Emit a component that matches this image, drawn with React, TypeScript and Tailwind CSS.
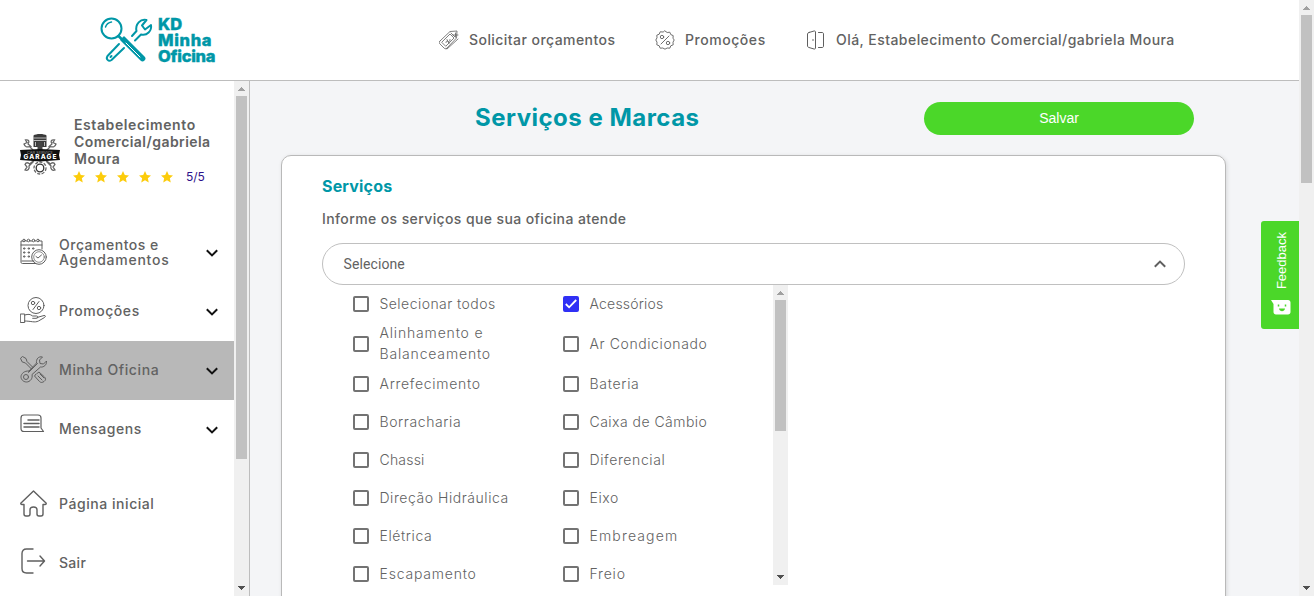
import type { ReactNode } from "react";

function Scrollbar({ thumb, upColor = "#a0a0a0" }: { thumb: string; upColor?: string }) {
  return (
    <div className="flex h-full w-[15px] shrink-0 flex-col items-center bg-[#f0f0f0]">
      <svg className="h-[15px] w-[15px] shrink-0" viewBox="0 0 15 15" shapeRendering="crispEdges">
        <path d="M7 6h1v1h1v1h1v1h1v1H4V9h1V8h1V7h1z" fill={upColor} />
      </svg>
      <div className={`w-[11px] shrink-0 bg-[#c1c1c1] ${thumb}`} />
      <svg className="mt-auto h-[15px] w-[15px] shrink-0" viewBox="0 0 15 15" shapeRendering="crispEdges">
        <path d="M4 5h7v1h-1v1H9v1H8v1H7V8H6V7H5V6H4z" fill="#505050" />
      </svg>
    </div>
  );
}

function Logo() {
  return (
    <div className="ml-[99px] flex w-[117px] items-center text-[#0097a7]">
      <svg width="56" height="50" viewBox="0 0 56 50" fill="none" stroke="currentColor" strokeWidth="2" strokeLinejoin="round" strokeLinecap="round" className="shrink-0">
        <circle cx="12.500" cy="13.500" r="10" />
        <path d="M6.500 12c1-3 3-4.500 6-5" strokeWidth="1.500" />
        <path d="M19.500 21l3 3" strokeWidth="2.500" />
        <path d="M22 25l20 20c2 2 5-1 3-3L25 22z" fill="currentColor" strokeWidth="1.500" />
        <path d="M27 28l14 14" stroke="white" strokeWidth="1" />
        <path d="M20 29L8.500 41c-2 3 1 6 4 4l12.500-12M11.500 42l1-1M33 21l4.500-5c-1.500-7 4-12.500 10-11l-4.500 5.500 3 4 6-4.500c1 6-4 11-10 9.500l-6 6" />
      </svg>
      <div className="ml-[3px] flex flex-col font-extrabold leading-[16px]">
        <span className="text-[16.500px] tracking-[0px] [-webkit-text-stroke:0.4px_currentColor]">KD</span>
        <span className="text-[16.500px] tracking-[0.65px] [-webkit-text-stroke:0.4px_currentColor]">Minha</span>
        <span className="text-[16.500px] tracking-[-0.25px] [-webkit-text-stroke:0.4px_currentColor]">Oficina</span>
      </div>
    </div>
  );
}

function Thin({ size = 27, vb = "0 0 27 27", sw = 1, className = "", children }: { size?: number; vb?: string; sw?: number; className?: string; children: ReactNode }) {
  return (
    <svg width={size} height={size} viewBox={vb} fill="none" stroke="#5f5f5f" strokeWidth={sw} strokeLinecap="round" strokeLinejoin="round" className={`shrink-0 ${className}`}>
      {children}
    </svg>
  );
}

const TagIcon = () => (
  <Thin size={20} vb="0 0 20 20" sw={0.8}>
    <path d="M1 11L11 1.500l7-.5-.5 7L8 18c-1 1-2 1-3 0l-4-4c-1-1-1-2 0-3z" />
    <path d="M3 12l8-8 4 4-8 8zM12 3l4 4M7 12.500c0-2.500 2-1 2-1s2 1 2-2M8 9.500l2 4M14 5h5M16.500 3v4M7 18.500l1 .5L19 9" />
  </Thin>
);

const BadgeIcon = () => (
  <Thin size={20} vb="0 0 20 20" sw={0.9}>
    <path d="M10 1l2.200 1.500 2.600-.3 1 2.400 2.400 1-.2 2.600L19.200 10 18 12.200l.2 2.600-2.400 1-1 2.400-2.600-.2L10 19.200 7.800 18l-2.600.2-1-2.400-2.400-1 .2-2.600L.8 10 2 7.800l-.2-2.600 2.400-1 1-2.400 2.600.2z" />
    <path d="M6 14l8-8" /><circle cx="7" cy="7" r="1.700" /><circle cx="13" cy="13" r="1.700" />
  </Thin>
);

const DoorIcon = () => (
  <Thin size={20} vb="0 0 20 20" sw={1}>
    <path d="M3 2.500l5-1.500c1-.2 1.500.2 1.500 1v16c0 .8-.5 1.200-1.500 1l-5-1.500c-1-.2-1.500-.8-1.500-1.500V4c0-.8.5-1.200 1.500-1.500zM12.500 2.500H16c1 0 1.500.5 1.500 1.500v12c0 1-.5 1.500-1.500 1.500h-3.500" />
    <path d="M7 9.500v1" />
  </Thin>
);

const CalendarIcon = () => (
  <Thin className="-mt-[2px]">
    <path d="M3 3H1v21c0 1 .5 1.500 1.500 1.500H16M6 3h1M10 3h2M15 3h1M20 3h2v8M1 7h21M2 23h12" />
    <circle cx="4" cy="2.500" r="1.300" /><circle cx="8.500" cy="2.500" r="1.300" /><circle cx="13.500" cy="2.500" r="1.300" /><circle cx="18" cy="2.500" r="1.300" />
    <path d="M4 10h1v1H4zM8.500 10h1v1h-1zM13 10h1v1h-1zM4 14h1v1H4zM8.500 14h1v1h-1zM4 18h1v1H4zM8.500 18h1v1h-1z" />
    <circle cx="19" cy="19" r="7.300" /><circle cx="19" cy="19" r="5.300" strokeWidth=".7" /><path d="M16 18.500l2 1.500 3.500-3" />
  </Thin>
);

const HandIcon = () => (
  <Thin className="-mt-[2px]">
    <circle cx="16" cy="8.500" r="8" /><path d="M13 12.500l6-8" /><circle cx="13" cy="6" r="1.700" /><circle cx="19" cy="11" r="1.700" />
    <path d="M.7 17h4v8.500h-4zM4.700 18c4-1 5-1 8 1h4c1.500 0 1.500 2.300 0 2.300h-4M17 20.500l7-2c2-.2 1.500 1.500.5 2l-6 3.500c-4 2-7 0-14 0" />
  </Thin>
);

const ToolsIcon = () => (
  <Thin className="-mt-[3px]">
    <path d="M.8 2L2.500.5 6 2.500l1 3 6 6-1.500 1.500-6-6-3-1zM16 18l-1.500 2 5 5.500c1.500 1.500 3 1 4.500 0 2-1.500 2-3 .5-4.500l-5.500-5-2 1.500M18 20l4 4M20 18l4 4" />
    <path d="M9 15l7.500-8c-.5-4 2-7 6-6l-3 3 .5 3.500 3.500.5 3-3c.5 4-3 6.500-6 6L12 18.500c1 4-2 7.500-5.500 7.500S.8 23 1 20.500 4 14.500 9 15zM8.500 16.500l9-9" />
    <circle cx="6" cy="21" r="2.500" />
  </Thin>
);

const MessageIcon = () => (
  <Thin sw={1.200} className="-mt-[6px]">
    <path d="M4 2h14c2 0 3 1 3 3v10l2.500 3.500H4c-2 0-3-1-3-3V5c0-2 1-3 3-3z" />
    <path d="M8 7h11M4 10.500h15M4 14h15" strokeWidth="1.500" />
  </Thin>
);

const HomeIcon = () => (
  <Thin sw={1.400}>
    <path d="M13.500 1L1 13c-.5.700 0 1.500 1 1.500h2V24c0 1.500.5 2 2 2h2c1.500 0 2-.5 2-2v-4c0-4 7-4 7 0v4c0 1.500.5 2 2 2h2c1.500 0 2-.5 2-2v-9.500h2c1 0 1.500-.8 1-1.500z" />
  </Thin>
);

const ExitIcon = () => (
  <Thin sw={1.400} className="-mt-[2px]">
    <path d="M13 1H6.500C3.500 1 2 2.500 2 5.500v15C2 23.500 3.500 25 6.500 25H13M7.500 13h17M20 8l4.500 5-4.500 5" />
  </Thin>
);

function Garage() {
  return (
    <svg width="40" height="42" viewBox="0 0 40 42" className="shrink-0">
      <g fill="none" stroke="#666" strokeWidth="1.300">
        <path d="M11.500 14L8 11c2-3 .500-4.500-2.500-4l1.500 2.500L4 11c1 3 3 3.500 5.500 2.500l4 4M28.500 14l3.500-3c-2-3-.500-4.500 2.500-4L33 9.500l3 1.500c-1 3-3 3.500-5.500 2.500l-4 4M14 28l-5 5c1 3-1.500 5-4 4l2-3-2-2.500c1-2.500 3.500-2 4.500-.500l5-4M26 28l5 5c-1 3 1.500 5 4 4l-2-3 2-2.500c-1-2.500-3.500-2-4.500-.500l-5-4" />
        <circle cx="20" cy="35" r="3.800" stroke="#333" /><circle cx="20" cy="35" r="6" strokeDasharray="3 1.500" />
      </g>
      <path d="M13.500 2.500c2-2 11-2 13 0V14h-13z" fill="#3a3a3a" />
      <path d="M13.500 5h13M13.500 7.500h13M15.500 9v4M24.500 9v4" stroke="#ddd" strokeWidth=".8" />
      <path d="M17.500 9h5v9h-5z" fill="#444" />
      <path d="M0 17l20-1 20 1-1 5 1 5-20 1.500L0 27l1-5z" fill="#111" />
      <text x="20" y="20.500" textAnchor="middle" fontSize="4" fill="#999" fontFamily="Inter">CAR SERVICE</text>
      <text x="20" y="26" textAnchor="middle" fontSize="6.500" textLength="33" fill="white" fontWeight="800" fontFamily="Inter">GARAGE</text>
    </svg>
  );
}

const Star = () => (
  <svg width="12" height="12" viewBox="0 0 24 24" fill="#fccc0b">
    <path d="M12 0l3.600 8 8.400.9-6.300 5.700L19.500 23 12 18.700 4.500 23l1.800-8.400L0 8.900 8.400 8z" />
  </svg>
);

function NavItem({ icon, children, arrow, active, tracking = "tracking-[0.55px]" }: { icon: ReactNode; children: ReactNode; arrow?: boolean; active?: boolean; tracking?: string }) {
  return (
    <div className={`flex h-[59px] shrink-0 items-center pl-5 pr-4 ${active ? "bg-[#b8b8b8]" : ""}`}>
      {icon}
      <span className={`ml-3 flex-1 text-[14px] font-medium leading-[15px] ${tracking} ${arrow ? "-mt-[2px]" : ""}`}>{children}</span>
      {arrow && (
        <svg width="12" height="8" viewBox="0 0 12 8" fill="none" stroke="#111" strokeWidth="2" className="mt-px">
          <path d="M.8 1.200L6 6.400l5.200-5.200" />
        </svg>
      )}
    </div>
  );
}

function Check({ checked, tracking, children }: { checked?: boolean; tracking: string; children: ReactNode }) {
  return (
    <div className="flex w-[210px] items-center">
      <span className={`flex size-4 shrink-0 items-center justify-center rounded-[2px] border-2 ${checked ? "border-[#3030f5] bg-[#3030f5]" : "border-[#737373]"}`}>
        {checked && (
          <svg width="12" height="10" viewBox="0 0 12 10" fill="none" stroke="white" strokeWidth="1.800" className="shrink-0"><path d="M.8 5l3.300 3.300L11.200 1" /></svg>
        )}
      </span>
      <span className={`-mt-[2px] ml-[10.500px] whitespace-nowrap text-[14px] font-light leading-[21px] ${tracking}`}>{children}</span>
    </div>
  );
}

export default function App() {
  return (
    <div className="flex h-[596px] w-[1314px] overflow-hidden bg-white font-['Inter','Open_Sans',sans-serif] text-[#626262]">
      <div className="flex min-w-0 flex-1 flex-col">
        <header className="flex h-[81px] shrink-0 items-center border-b border-[#bdbdbd] text-[14px] font-medium">
          <Logo />
          <nav className="ml-[223px] flex items-center">
            <div className="flex w-[216px] items-center gap-[10px]"><TagIcon /><span className="-mt-[2px] tracking-[0.44px]">Solicitar orçamentos</span></div>
            <div className="flex w-[151px] items-center gap-[10px]"><BadgeIcon /><span className="-mt-[2px] tracking-[0.55px]">Promoções</span></div>
            <div className="flex items-center gap-[10px] whitespace-nowrap"><DoorIcon /><span className="-mt-[2px] tracking-[0.45px]">Olá, Estabelecimento Comercial/gabriela Moura</span></div>
          </nav>
        </header>
        <div className="flex min-h-0 flex-1">
          <aside className="flex w-[250px] shrink-0 border-r border-[#bdbdbd]">
            <div className="flex w-[234px] flex-col">
              <div className="flex h-[142px] shrink-0 pl-5 pt-[35px]">
                <div className="pt-[17px]"><Garage /></div>
                <div className="ml-[14px]">
                  <div className="flex flex-col text-[14px] font-semibold leading-[17px]">
                    <span className="tracking-[0.6px]">Estabelecimento</span>
                    <span className="tracking-[0.44px]">Comercial/gabriela</span>
                    <span className="tracking-[0.6px]">Moura</span>
                  </div>
                  <div className="-ml-px mt-[4px] flex items-center gap-[10px] leading-[13px]">
                    <Star /><Star /><Star /><Star /><Star />
                    <span className="-mt-[2px] ml-[3px] text-[12px] text-[#2d128b]">5/5</span>
                  </div>
                </div>
              </div>
              <NavItem icon={<CalendarIcon />} arrow><span className="tracking-[0.5px]">Orçamentos e</span><br /><span className="tracking-[0.75px]">Agendamentos</span></NavItem>
              <NavItem icon={<HandIcon />} arrow>Promoções</NavItem>
              <NavItem icon={<ToolsIcon />} arrow active tracking="tracking-[0.6px]">Minha Oficina</NavItem>
              <NavItem icon={<MessageIcon />} arrow>Mensagens</NavItem>
              <div className="h-[15px] shrink-0" />
              <NavItem icon={<HomeIcon />}>Página inicial</NavItem>
              <NavItem icon={<ExitIcon />} tracking="tracking-[0.3px]">Sair</NavItem>
            </div>
            <Scrollbar thumb="h-[363px]" />
          </aside>
          <main className="relative flex-1 overflow-hidden bg-[#f4f5f7] pl-[31px]">
            <div className="flex h-[74px] items-center">
              <h1 className="ml-[194px] w-[449px] text-[24px] font-bold tracking-[0.49px] text-[#0097a7]">Serviços e Marcas</h1>
              <button className="h-[33px] w-[270px] rounded-full bg-[#4bd729] font-['Liberation_Sans',sans-serif] text-[14px] text-white">Salvar</button>
            </div>
            <section className="h-[500px] w-[945px] rounded-[10px] border border-[#b9b9b9] bg-white px-10 pt-[19px] shadow-[1px_1px_4px_rgba(0,0,0,0.12)]">
              <h2 className="text-[16px] font-bold leading-[22px] tracking-[0.18px] text-[#0097a7]">Serviços</h2>
              <p className="mt-[12px] text-[14px] font-medium leading-[20px] tracking-[0.39px]">Informe os serviços que sua oficina atende</p>
              <div className="mt-[14px] flex h-[42px] w-[863px] items-center justify-between rounded-full border border-[#c0c0c0] pl-[20.500px] pr-[18px] font-['Roboto',sans-serif] text-[14px] tracking-[0.1px]">
                Selecione
                <svg width="12" height="8" viewBox="0 0 12 8" fill="none" stroke="#606060" strokeWidth="2"><path d="M.8 6.800L6 1.600l5.200 5.200" /></svg>
              </div>
              <div className="flex h-[300px] w-[466px] overflow-hidden">
                <div className="flex flex-1 flex-col pl-[31px]">
                  <div className="flex h-[38px] shrink-0"><Check tracking="tracking-[0.45px]">Selecionar todos</Check><Check checked tracking="tracking-[0.2px]">Acessórios</Check></div>
                  <div className="flex h-[42px] shrink-0"><Check tracking="tracking-[0.83px]">Alinhamento e<br />Balanceamento</Check><Check tracking="tracking-[0.6px]">Ar Condicionado</Check></div>
                  <div className="flex h-[38px] shrink-0"><Check tracking="tracking-[0.7px]">Arrefecimento</Check><Check tracking="tracking-[0.7px]">Bateria</Check></div>
                  <div className="flex h-[38px] shrink-0"><Check tracking="tracking-[0.6px]">Borracharia</Check><Check tracking="tracking-[0.47px]">Caixa de Câmbio</Check></div>
                  <div className="flex h-[38px] shrink-0"><Check tracking="tracking-[0.2px]">Chassi</Check><Check tracking="tracking-[0.62px]">Diferencial</Check></div>
                  <div className="flex h-[38px] shrink-0"><Check tracking="tracking-[0.55px]">Direção Hidráulica</Check><Check tracking="tracking-[0.6px]">Eixo</Check></div>
                  <div className="flex h-[38px] shrink-0"><Check tracking="tracking-[0.6px]">Elétrica</Check><Check tracking="tracking-[1.15px]">Embreagem</Check></div>
                  <div className="flex h-[38px] shrink-0"><Check tracking="tracking-[0.8px]">Escapamento</Check><Check tracking="tracking-[0.8px]">Freio</Check></div>
                </div>
                <Scrollbar thumb="h-[131px]" />
              </div>
            </section>
            <div className="absolute right-0 top-[140px] flex h-[108px] w-[38px] flex-col items-center justify-between rounded-l-[3px] bg-[#4bd729] pb-[14px] pl-[2px] pt-[11px]">
              <span className="rotate-180 font-['Liberation_Sans',sans-serif] text-[13px] leading-[15px] text-white [writing-mode:vertical-rl]">Feedback</span>
              <svg width="20" height="15" viewBox="0 0 20 15"><path d="M0 0h17c1.500 0 2.500 1 2.500 2.500v9.500c0 1.500-1 2.500-2.500 2.500H5c-1.500 0-2.500-1-2.500-2.500V4z" fill="white" /><path d="M7.500 4.500v2M14.500 4.500v2" stroke="#4bd729" strokeWidth="1.500" /><path d="M8 8.500h6c-.5 3.500-5.500 3.500-6 0z" fill="#4bd729" /></svg>
            </div>
          </main>
        </div>
      </div>
      <Scrollbar thumb="h-[168px]" />
    </div>
  );
}
